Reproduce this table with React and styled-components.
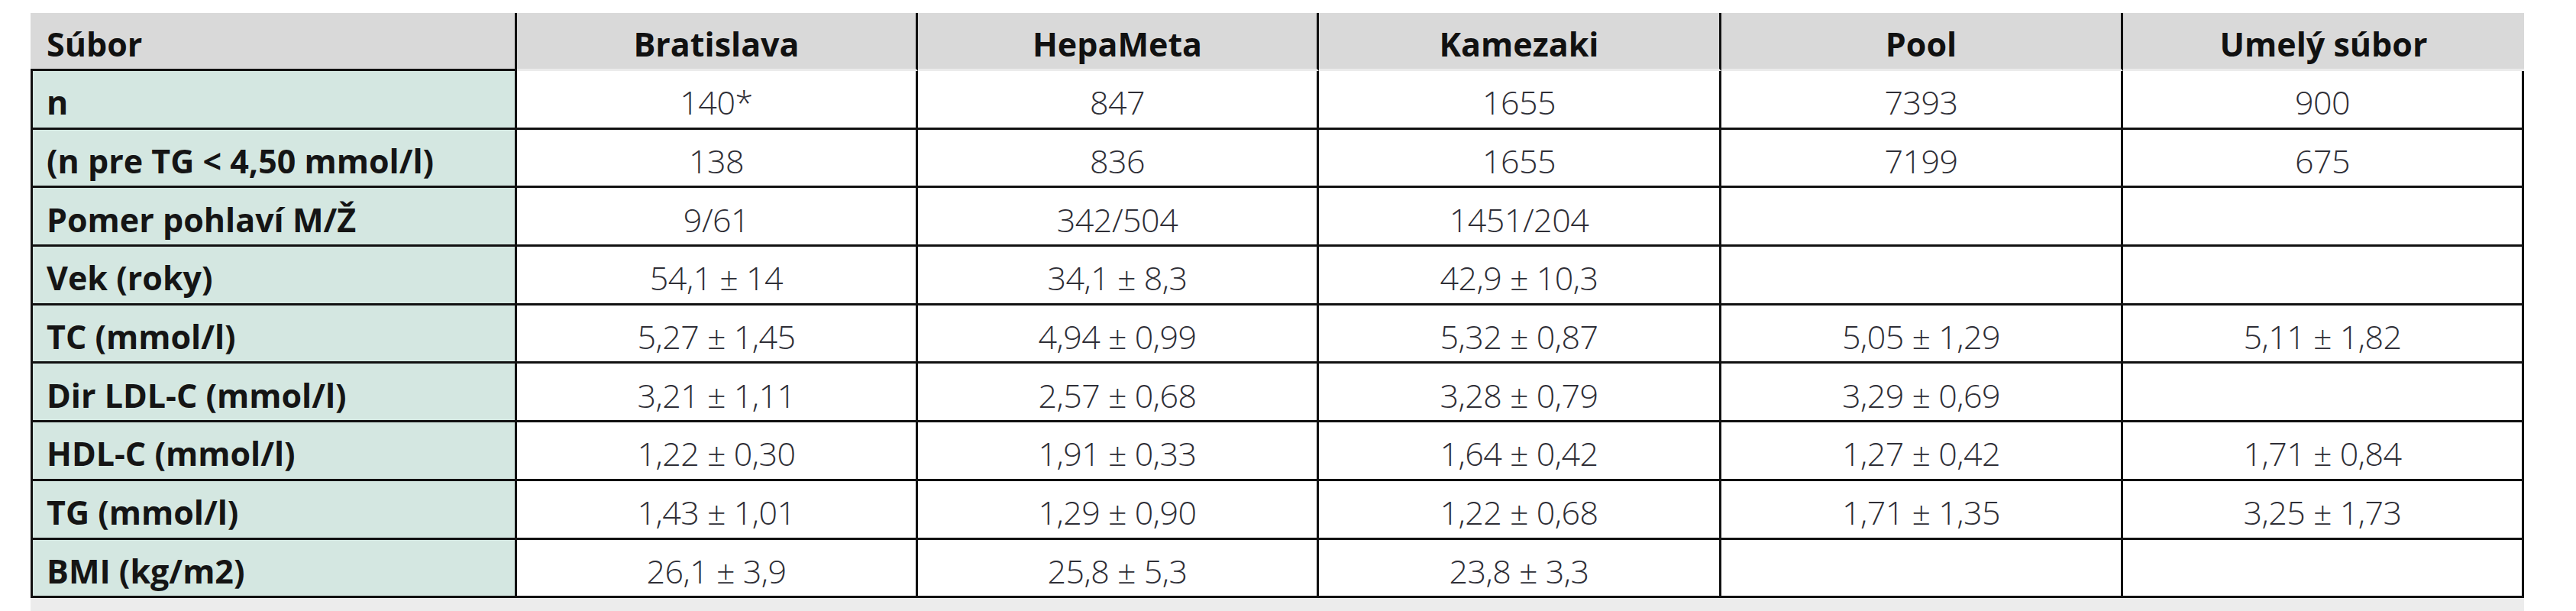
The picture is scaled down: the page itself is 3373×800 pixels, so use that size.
import React from "react";
import styled, { createGlobalStyle } from "styled-components";

const GlobalStyle = createGlobalStyle`
  html, body {
    margin: 0;
    padding: 0;
    background: #ffffff;
  }
  body {
    font-family: "Open Sans", "Liberation Sans", sans-serif;
  }
`;

const Page = styled.div`
  padding: 17px 0 0 40px;
  width: 3265px;
`;

const Table = styled.table`
  width: 3265px;
  table-layout: fixed;
  border-collapse: separate;
  border-spacing: 0;
  font-family: "Open Sans", "Liberation Sans", sans-serif;
  font-size: 43px;
`;

const HeadRow = styled.tr`
  height: 76px;
`;

const BodyRow = styled.tr`
  height: 76.7px;
`;

const HeadCell = styled.th`
  box-sizing: border-box;
  background: #d9d9d9;
  color: #111111;
  font-weight: 700;
  text-align: ${(p) => (p.$label ? "left" : "center")};
  padding: 8px 0 0 ${(p) => (p.$label ? "21px" : "0")};
  border-right: ${(p) => (p.$last ? "none" : "3px solid #111111")};
  border-bottom: 3px solid ${(p) => (p.$label ? "#111111" : "#ebebeb")};
  white-space: nowrap;
`;

const LabelCell = styled.td`
  box-sizing: border-box;
  background: #d4e7e1;
  color: #151515;
  font-weight: 700;
  text-align: left;
  padding: 8px 0 0 18px;
  border-left: 3px solid #111111;
  border-right: 3px solid #111111;
  border-bottom: 3px solid #111111;
  white-space: nowrap;
`;

const ValueCell = styled.td`
  box-sizing: border-box;
  background: #ffffff;
  color: #2e2e36;
  font-weight: 300;
  text-align: center;
  padding: 8px 0 0 0;
  border-right: 3px solid #111111;
  border-bottom: 3px solid #111111;
  white-space: nowrap;
  letter-spacing: -0.5px;
`;

const Footer = styled.div`
  width: 3265px;
  height: 17px;
  background: #ececec;
`;

const columns = ["Bratislava", "HepaMeta", "Kamezaki", "Pool", "Umelý súbor"];
const widths = [637, 525, 525, 527, 526, 525];

const rows = [
  ["n", ["140*", "847", "1655", "7393", "900"]],
  ["(n pre TG < 4,50 mmol/l)", ["138", "836", "1655", "7199", "675"]],
  ["Pomer pohlaví M/Ž", ["9/61", "342/504", "1451/204", "", ""]],
  ["Vek (roky)", ["54,1 ± 14", "34,1 ± 8,3", "42,9 ± 10,3", "", ""]],
  ["TC (mmol/l)", ["5,27 ± 1,45", "4,94 ± 0,99", "5,32 ± 0,87", "5,05 ± 1,29", "5,11 ± 1,82"]],
  ["Dir LDL-C (mmol/l)", ["3,21 ± 1,11", "2,57 ± 0,68", "3,28 ± 0,79", "3,29 ± 0,69", ""]],
  ["HDL-C (mmol/l)", ["1,22 ± 0,30", "1,91 ± 0,33", "1,64 ± 0,42", "1,27 ± 0,42", "1,71 ± 0,84"]],
  ["TG (mmol/l)", ["1,43 ± 1,01", "1,29 ± 0,90", "1,22 ± 0,68", "1,71 ± 1,35", "3,25 ± 1,73"]],
  ["BMI (kg/m2)", ["26,1 ± 3,9", "25,8 ± 5,3", "23,8 ± 3,3", "", ""]],
];

export default function App() {
  return (
    <>
      <GlobalStyle />
      <Page>
        <Table>
          <colgroup>
            {widths.map((w, i) => (
              <col key={i} style={{ width: w }} />
            ))}
          </colgroup>
          <thead>
            <HeadRow>
              <HeadCell $label>Súbor</HeadCell>
              {columns.map((c, i) => (
                <HeadCell key={c} $last={i === columns.length - 1}>
                  {c}
                </HeadCell>
              ))}
            </HeadRow>
          </thead>
          <tbody>
            {rows.map(([label, values]) => (
              <BodyRow key={label}>
                <LabelCell>{label}</LabelCell>
                {values.map((v, i) => (
                  <ValueCell key={i}>{v}</ValueCell>
                ))}
              </BodyRow>
            ))}
          </tbody>
        </Table>
        <Footer />
      </Page>
    </>
  );
}
